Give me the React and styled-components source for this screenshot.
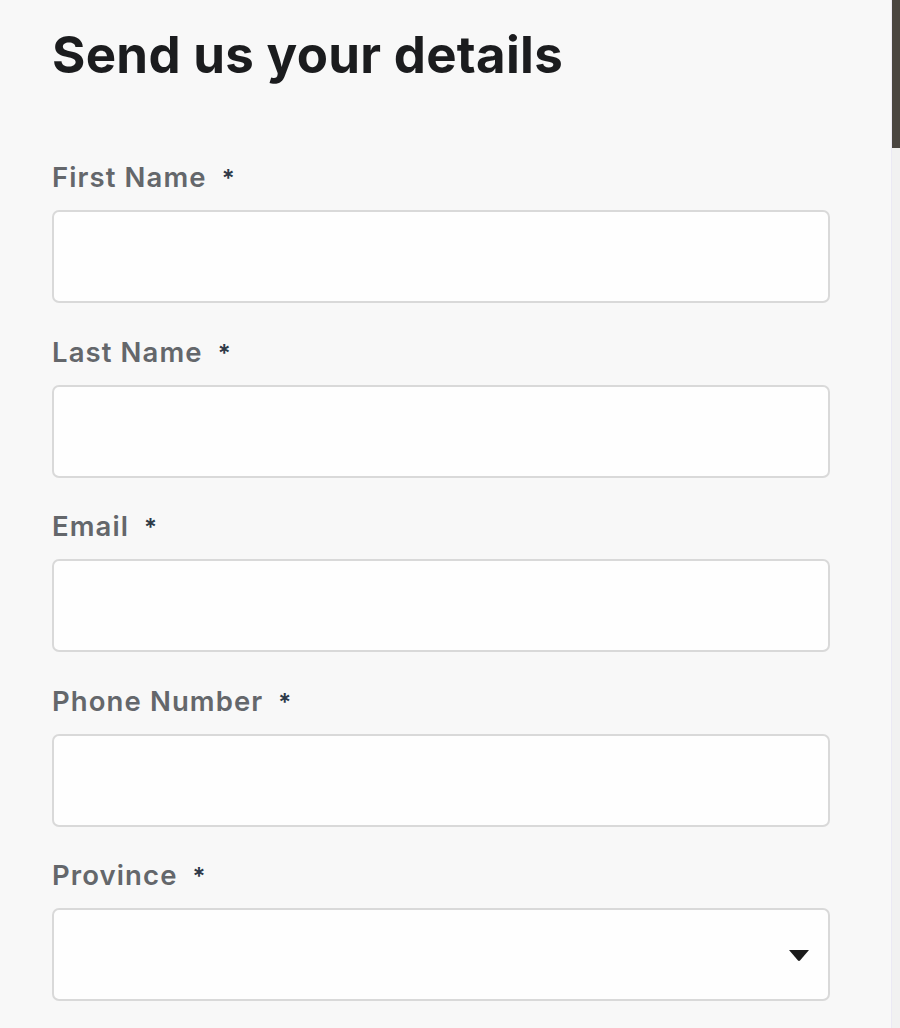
import React from 'react'
import styled, { createGlobalStyle } from 'styled-components'

const Global = createGlobalStyle`
  html, body {
    margin: 0;
    padding: 0;
    background: #f8f8f8;
  }
  body {
    font-family: Inter, "Noto Sans", sans-serif;
  }
  * { box-sizing: border-box; }
`

const fields = ['First Name', 'Last Name', 'Email', 'Phone Number']

export default function App () {
  return (
    <Page>
      <Global />
      <Main>
        <Title>Send us your details</Title>
        <Form>
          {fields.map(f => (
            <Field key={f}>
              <Label>{f}<Star>*</Star></Label>
              <Input type="text" />
            </Field>
          ))}
          <Field>
            <Label>Province<Star>*</Star></Label>
            <SelectBox>
              <Caret viewBox="0 0 22 12"><path d="M1 1h20l-9 10.5a1.4 1.4 0 0 1-2 0z" fill="#1b1b1b" /></Caret>
            </SelectBox>
          </Field>
        </Form>
      </Main>
      <ScrollTrack><Thumb /></ScrollTrack>
    </Page>
  )
}

const Page = styled.div`
  display: flex;
  height: 1028px;
  overflow: hidden;
`
const Main = styled.div`
  flex: 1;
  padding: 23px 61px 0 52px;
`
const Title = styled.h1`
  margin: 0;
  font-size: 51px;
  font-weight: 700;
  color: #1b1c1e;
  line-height: 64px;
  letter-spacing: 0.3px;
`
const Form = styled.div`
  display: flex;
  flex-direction: column;
  gap: 32.5px;
  padding-top: 74px;
`
const Field = styled.div`
  display: flex;
  flex-direction: column;
  gap: 17px;
`
const Label = styled.label`
  display: block;
  height: 32px;
  font-size: 27.5px;
  font-weight: 600;
  color: #64676b;
  line-height: 32px;
  letter-spacing: 1.1px;
`
const Star = styled.span`
  color: #2e3a48;
  margin-left: 15px;
  font-size: 24px;
  line-height: 0;
`
const Input = styled.input`
  display: block;
  width: 100%;
  height: 93px;
  border: 2px solid #d9d9d9;
  border-radius: 7px;
  background: #fefefe;
  outline: none;
`
const SelectBox = styled.div`
  display: flex;
  align-items: center;
  justify-content: flex-end;
  height: 93px;
  border: 2px solid #d9d9d9;
  border-radius: 7px;
  background: #fefefe;
  padding-right: 18px;
`
const Caret = styled.svg`
  width: 22px;
  height: 12px;
  margin-top: 1px;
`
const ScrollTrack = styled.div`
  width: 9px;
  flex: none;
  background: #f1f1f1;
  border-left: 1px solid #ebe9f4;
`
const Thumb = styled.div`
  height: 148px;
  background: #4a4641;
`
